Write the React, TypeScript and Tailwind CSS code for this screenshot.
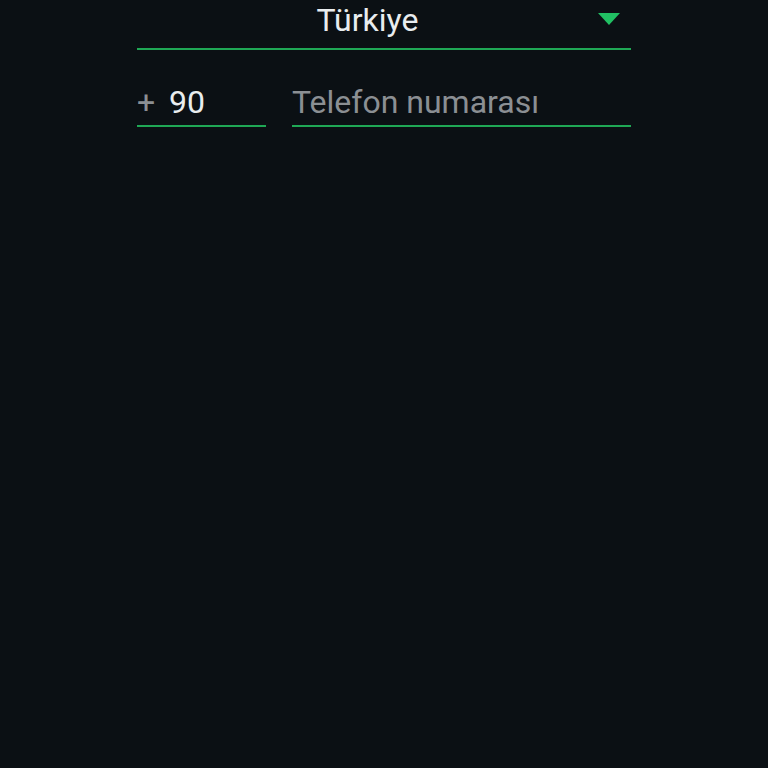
export default function App() {
  return (
    <div className="min-h-screen w-full bg-[#0b1014] font-['Roboto',sans-serif]">
      <div className="mx-auto w-[494px]">
        {/* country picker */}
        <div className="flex h-[50px] items-start border-b-2 border-[#1fa855]">
          <div className="flex-1 text-center text-[32px] leading-[40px] text-[#e9edef]">Türkiye</div>
          <div className="w-[33px] pt-[13px]">
            <svg width="22" height="12" viewBox="0 0 22 12">
              <path d="M0 0 H22 L11 12 Z" fill="#21c063" />
            </svg>
          </div>
        </div>

        {/* phone row */}
        <div className="mt-[32px] flex items-start gap-[26px]">
          <div className="flex w-[129px] items-center border-b-2 border-[#1fa855] pb-[3px] text-[32px] leading-[40px]">
            <span className="w-[32px] text-[#8b8f93]">+</span>
            <span className="text-[#e9edef]">90</span>
          </div>
          <div className="flex-1 border-b-2 border-[#1fa855] pb-[3px]">
            <input
              type="tel"
              placeholder="Telefon numarası"
              className="h-[40px] w-full bg-transparent text-[32px] leading-[40px] text-[#e9edef] outline-none placeholder:text-[#8b8f93]"
            />
          </div>
        </div>
      </div>
    </div>
  );
}
